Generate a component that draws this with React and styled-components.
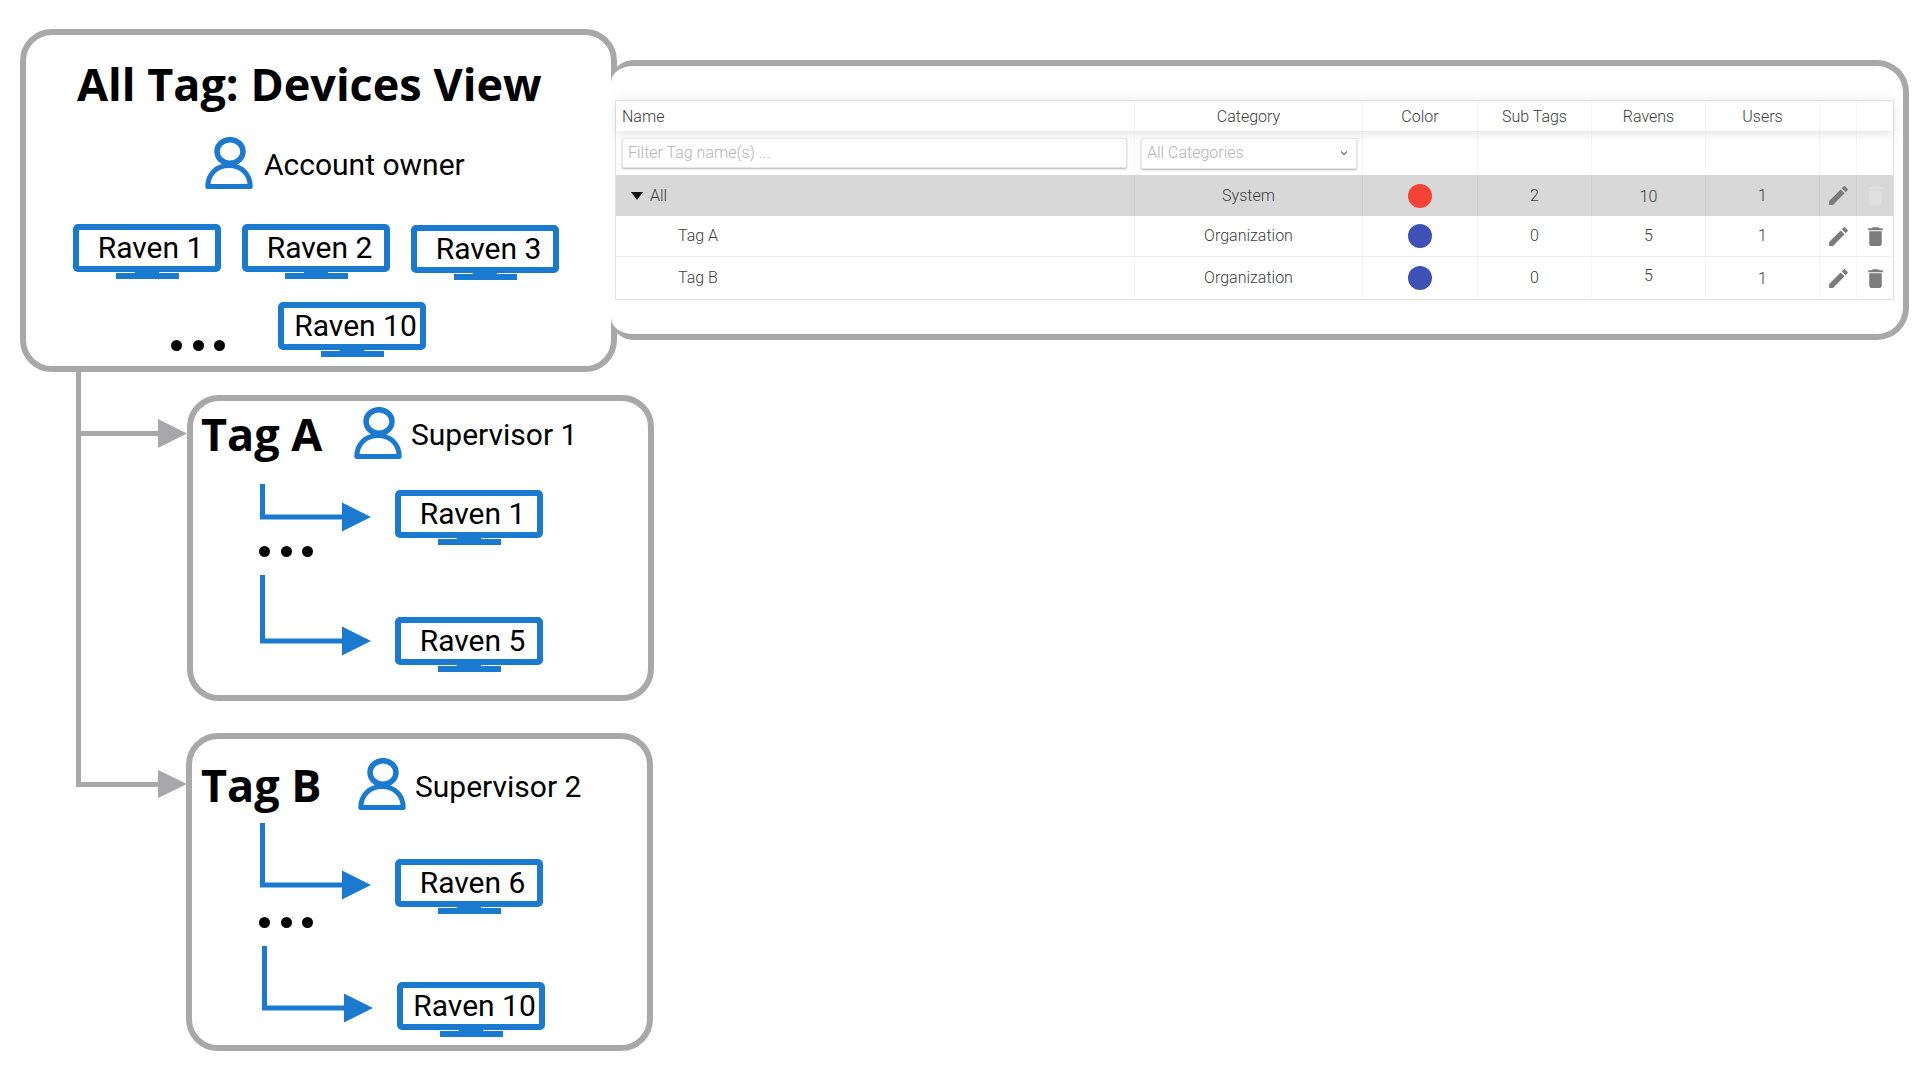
import React from "react";
import styled, { createGlobalStyle } from "styled-components";

const BLUE = "#1a7ad0";
const GREY = "#a8a8aa";

const GlobalStyle = createGlobalStyle`
  html, body {
    margin: 0;
    padding: 0;
    background: #fff;
    overflow: hidden;
  }
`;

const Canvas = styled.div`
  position: relative;
  width: 1920px;
  height: 1080px;
  background: #fff;
  overflow: hidden;
`;

const Connector = styled.svg`
  position: absolute;
  left: 0;
  top: 0;
`;

const MainCard = styled.section`
  position: absolute;
  left: 20px;
  top: 29px;
  z-index: 2;
  width: 597px;
  height: 343px;
  box-sizing: border-box;
  padding: 0 0 0 47px;
  display: flex;
  flex-direction: column;
  align-items: flex-start;
  background: #fff;
  border: 6px solid ${GREY};
  border-radius: 32px;
`;

const MainTitle = styled.h1`
  margin: 11px 0 0 4px;
  height: 76px;
  font: 700 45px/76px "Open Sans", sans-serif;
  color: #000;
  white-space: nowrap;
`;

const OwnerRow = styled.div`
  margin: 15px 0 0 132px;
  display: flex;
  align-items: flex-start;
  gap: 11px;
`;

const PersonLabel = styled.span`
  display: block;
  margin-top: ${(p) => p.$top}px;
  font: 400 30px/36px Roboto, sans-serif;
  color: #000;
  white-space: nowrap;
`;

const DeviceRow = styled.div`
  margin-top: 35px;
  display: flex;
  align-items: flex-start;
  gap: 21px;
`;

const MoreRow = styled.div`
  margin-top: 22px;
  display: flex;
  align-items: flex-start;
`;

const Dots = styled.div`
  display: flex;
  gap: 10.5px;
  margin: ${(p) => p.$top}px 0 0 ${(p) => p.$left}px;

  i {
    display: block;
    width: 11px;
    height: 11px;
    border-radius: 50%;
    background: #000;
  }
`;

const Device = styled.div`
  width: 148px;
  flex: none;
  margin: ${(p) => p.$top || 0}px 0 0 ${(p) => p.$left || 0}px;
  display: flex;
  flex-direction: column;
  align-items: center;
`;

const Screen = styled.div`
  width: 100%;
  height: 48px;
  box-sizing: border-box;
  padding-left: 7px;
  border: 6px solid ${BLUE};
  border-radius: 5px;
  background: #fff;
  font: 400 30px/35px Roboto, sans-serif;
  color: #000;
  text-align: center;
  white-space: nowrap;
`;

const Neck = styled.div`
  width: 24px;
  height: 1px;
  background: ${BLUE};
`;

const Base = styled.div`
  width: 63px;
  height: 6px;
  background: ${BLUE};
`;

// the panel runs over the main card's right border, its open left side tapers out
const TablePanel = styled.section`
  position: absolute;
  left: 611px;
  top: 60px;
  z-index: 3;
  width: 1298px;
  height: 280px;
  box-sizing: border-box;
  padding: 34px 0 0 4px;
  background: #fff;
  border: 6px solid ${GREY};
  border-left: 0;
  border-radius: 22px 32px 32px 22px;
`;

const Table = styled.div`
  width: 1279px;
  box-sizing: border-box;
  border: 1px solid #e2e2e2;
  box-shadow: 0 -4px 12px rgba(0, 0, 0, 0.04);
  font: 300 16px/20px Roboto, sans-serif;
  color: #3c3c3c;
`;

const Row = styled.div`
  display: grid;
  grid-template-columns: 519px 228px 115px 114px 114px 114px 37px 36px;
  height: ${(p) => p.$h}px;
  background: ${(p) => p.$bg || "transparent"};
  border-bottom: ${(p) => (p.$line ? "1px solid #efefef" : "none")};
  box-sizing: border-box;
  box-shadow: ${(p) => (p.$raised ? "0 4px 10px rgba(0, 0, 0, 0.09)" : "none")};
  position: relative;
`;

const Cell = styled.div`
  display: flex;
  align-items: center;
  justify-content: ${(p) => (p.$start ? "flex-start" : "center")};
  padding-left: ${(p) => p.$indent || 0}px;
  border-right: 1px solid rgba(0, 0, 0, 0.035);
  box-sizing: border-box;
  min-width: 0;
  &:last-child {
    border-right: none;
  }
`;

const Value = styled.span`
  display: block;
  transform: translateY(${(p) => p.$shift || 0}px);
  white-space: nowrap;
`;

const FilterBox = styled.div`
  width: ${(p) => p.$w}px;
  height: ${(p) => p.$h}px;
  box-sizing: border-box;
  margin-left: 6px;
  padding: 0 6px 0 5px;
  display: flex;
  align-items: center;
  justify-content: space-between;
  border: 1px solid #e6e6e6;
  border-radius: 2px;
  box-shadow: 0 1px 2px rgba(0, 0, 0, 0.3);
  background: #fff;
  color: #b4b4b4;
`;

const Caret = styled.i`
  display: block;
  width: 0;
  height: 0;
  margin-right: 7px;
  border-left: 6px solid transparent;
  border-right: 6px solid transparent;
  border-top: 8px solid #111;
`;

const Swatch = styled.span`
  display: block;
  width: 24px;
  height: 24px;
  border-radius: 50%;
  background: ${(p) => p.$color};
`;

const TagCard = styled.section`
  position: absolute;
  left: ${(p) => p.$x}px;
  top: ${(p) => p.$y}px;
  z-index: 2;
  width: 467px;
  height: ${(p) => p.$h}px;
  box-sizing: border-box;
  background: #fff;
  border: 6px solid ${GREY};
  border-radius: 32px;
  display: flex;
  flex-direction: column;
  align-items: flex-start;
`;

const TagHeader = styled.header`
  height: ${(p) => p.$h}px;
  box-sizing: border-box;
  padding: ${(p) => p.$top}px 0 0 ${(p) => p.$left}px;
  display: flex;
  align-items: flex-start;
`;

const TagTitle = styled.h2`
  margin: 3px 0 0;
  width: ${(p) => p.$w}px;
  font: 700 45px/60px "Open Sans", sans-serif;
  color: #000;
  white-space: nowrap;
`;

const TagPerson = styled.div`
  display: flex;
  align-items: flex-start;
  gap: ${(p) => p.$gap}px;
  margin-top: 6px;
`;

const Branch = styled.div`
  display: flex;
  align-items: flex-start;
  margin: ${(p) => p.$top || 0}px 0 0 ${(p) => p.$left}px;
`;

const Person = () => (
  <svg width="48" height="52" viewBox="0 0 48 52" style={{ flex: "none" }}>
    <ellipse cx="25" cy="14.5" rx="13" ry="11.8" fill="none" stroke={BLUE} strokeWidth="5.5" />
    <path
      d="M2.8 49.5C2.8 37 12 28.5 24 28.5S45.2 37 45.2 49.5Z"
      fill="none"
      stroke={BLUE}
      strokeWidth="5"
      strokeLinejoin="round"
    />
  </svg>
);

const Monitor = ({ name, top, left }) => (
  <Device $top={top} $left={left}>
    <Screen>{name}</Screen>
    <Neck />
    <Base />
  </Device>
);

const Elbow = ({ h }) => (
  <svg width="111" height={h} viewBox={`0 0 111 ${h}`} style={{ flex: "none" }}>
    <path d={`M2.5 0V${h - 15}H85`} fill="none" stroke={BLUE} strokeWidth="5" />
    <polygon points={`82,${h - 29.5} 111,${h - 15} 82,${h - 0.5}`} fill={BLUE} />
  </svg>
);

const ThreeDots = (props) => (
  <Dots {...props}>
    <i />
    <i />
    <i />
  </Dots>
);

const EditIcon = () => (
  <svg width="25" height="25" viewBox="0 0 24 24" fill="#7c7c7c">
    <path d="M3 17.25V21h3.75L17.81 9.94l-3.75-3.75L3 17.25zM20.71 7.04c.39-.39.39-1.02 0-1.41l-2.34-2.34c-.39-.39-1.02-.39-1.41 0l-1.83 1.83 3.75 3.75 1.83-1.83z" />
  </svg>
);

const TrashIcon = ({ off }) => (
  <svg width="25" height="25" viewBox="0 0 24 24" fill={off ? "#e0e0e0" : "#7c7c7c"}>
    <path d="M6 19c0 1.1.9 2 2 2h8c1.1 0 2-.9 2-2V7H6v12zM19 4h-3.5l-1-1h-5l-1 1H5v2h14V4z" />
  </svg>
);

const Chevron = () => (
  <svg width="12" height="12" viewBox="0 0 12 12" fill="none" stroke="#777" strokeWidth="1.3">
    <path d="M3 4.5 6 7.5 9 4.5" />
  </svg>
);

const rows = [
  { name: "All", cat: "System", color: "#f44336", sub: 2, ravens: 10, users: 1, h: 41, top: true, ravenShift: 1 },
  { name: "Tag A", cat: "Organization", color: "#3f51b5", sub: 0, ravens: 5, users: 1, h: 41, line: true },
  { name: "Tag B", cat: "Organization", color: "#3f51b5", sub: 0, ravens: 5, users: 1, h: 42, ravenShift: -2, userShift: 1 },
];

const TagTable = () => (
  <Table>
    <Row $h={30} $raised>
      <Cell $start $indent={6}>
        <Value $shift={1}>Name</Value>
      </Cell>
      {["Category", "Color", "Sub Tags", "Ravens", "Users"].map((h) => (
        <Cell key={h}>
          <Value $shift={1}>{h}</Value>
        </Cell>
      ))}
      <Cell />
      <Cell />
    </Row>
    <Row $h={44}>
      <Cell $start>
        <FilterBox $w={505} $h={30}>
          Filter Tag name(s) ...
        </FilterBox>
      </Cell>
      <Cell $start>
        <FilterBox $w={216} $h={31}>
          All Categories
          <Chevron />
        </FilterBox>
      </Cell>
      <Cell />
      <Cell />
      <Cell />
      <Cell />
      <Cell />
      <Cell />
    </Row>
    {rows.map((r) => (
      <Row key={r.name} $h={r.h} $bg={r.top ? "#d8d8d8" : ""} $line={r.line}>
        <Cell $start $indent={r.top ? 15 : 62}>
          {r.top && <Caret />}
          <Value>{r.name}</Value>
        </Cell>
        <Cell>
          <Value>{r.cat}</Value>
        </Cell>
        <Cell>
          <Swatch $color={r.color} />
        </Cell>
        <Cell>
          <Value>{r.sub}</Value>
        </Cell>
        <Cell>
          <Value $shift={r.ravenShift}>{r.ravens}</Value>
        </Cell>
        <Cell>
          <Value $shift={r.userShift}>{r.users}</Value>
        </Cell>
        <Cell>
          <EditIcon />
        </Cell>
        <Cell>
          <TrashIcon off={r.top} />
        </Cell>
      </Row>
    ))}
  </Table>
);

export default function App() {
  return (
    <Canvas>
      <GlobalStyle />
      <Connector width="200" height="820">
        <path d="M78.5 370V784.5H160M78.5 433.5H160" fill="none" stroke={GREY} strokeWidth="5" />
        <polygon points="158,419 187,433.5 158,448" fill={GREY} />
        <polygon points="158,770 187,784 158,798" fill={GREY} />
      </Connector>

      <MainCard>
        <MainTitle>All Tag: Devices View</MainTitle>
        <OwnerRow>
          <Person />
          <PersonLabel $top={10}>Account owner</PersonLabel>
        </OwnerRow>
        <DeviceRow>
          <Monitor name="Raven 1" />
          <Monitor name="Raven 2" />
          <Monitor name="Raven 3" top={1} />
        </DeviceRow>
        <MoreRow>
          <ThreeDots $top={38} $left={98} />
          <Monitor name="Raven 10" left={53} />
        </MoreRow>
      </MainCard>

      <TablePanel>
        <TagTable />
      </TablePanel>

      <TagCard $x={187} $y={395} $h={306}>
        <TagHeader $h={83} $top={0} $left={8}>
          <TagTitle $w={153}>Tag A</TagTitle>
          <TagPerson $gap={9}>
            <Person />
            <PersonLabel $top={10}>Supervisor 1</PersonLabel>
          </TagPerson>
        </TagHeader>
        <Branch $left={67}>
          <Elbow h={48} />
          <Monitor name="Raven 1" top={6} left={24} />
        </Branch>
        <ThreeDots $top={1} $left={66} />
        <Branch $left={67} $top={18}>
          <Elbow h={81} />
          <Monitor name="Raven 5" top={42} left={24} />
        </Branch>
      </TagCard>

      <TagCard $x={186} $y={733} $h={318}>
        <TagHeader $h={84} $top={13} $left={9}>
          <TagTitle $w={157}>Tag B</TagTitle>
          <TagPerson $gap={9}>
            <Person />
            <PersonLabel $top={11}>Supervisor 2</PersonLabel>
          </TagPerson>
        </TagHeader>
        <Branch $left={68}>
          <Elbow h={77} />
          <Monitor name="Raven 6" top={36} left={24} />
        </Branch>
        <ThreeDots $top={3} $left={67} />
        <Branch $left={70} $top={18}>
          <Elbow h={77} />
          <Monitor name="Raven 10" top={36} left={24} />
        </Branch>
      </TagCard>
    </Canvas>
  );
}
